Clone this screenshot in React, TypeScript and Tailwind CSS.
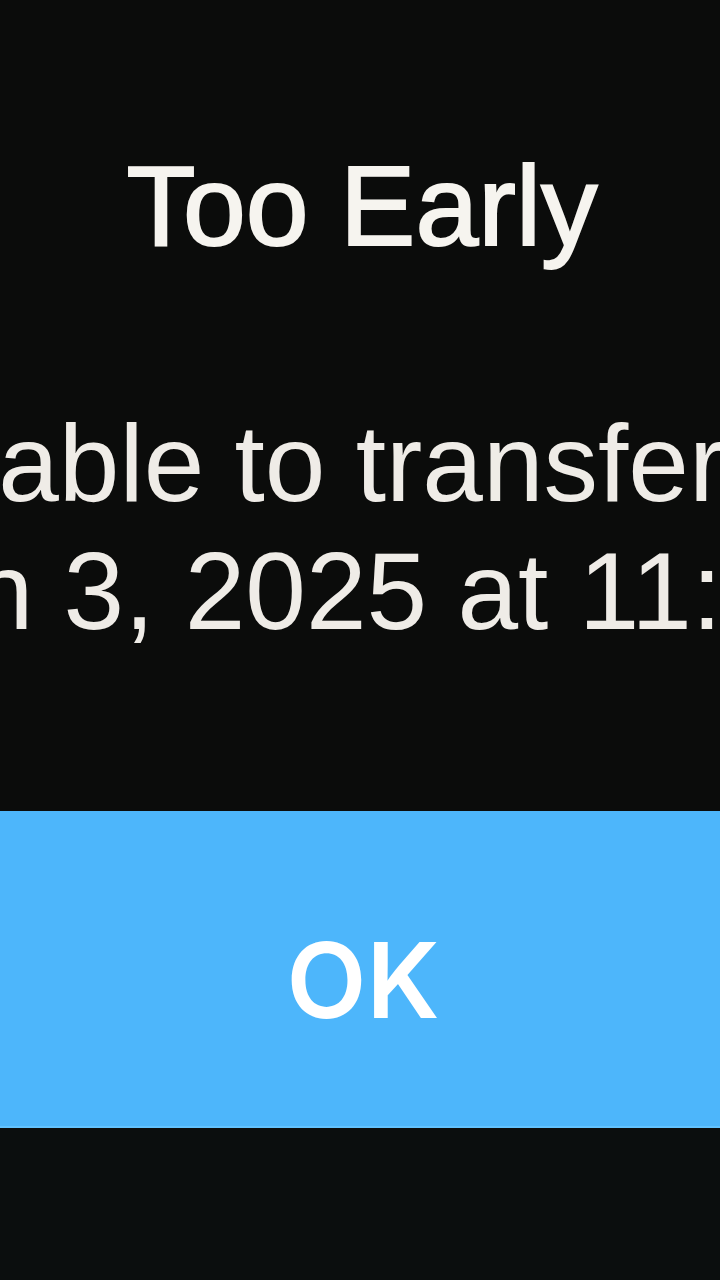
import React from "react";

export default function App() {
  return (
    <div className="w-[720px] h-[1280px] overflow-hidden bg-[#0b0c0b] flex flex-col font-['Liberation_Sans',Arial,sans-serif]">
      <div className="pt-[142px] pl-[4px] text-center text-[113px] leading-[128px] text-[#f6f4ef] whitespace-nowrap [-webkit-text-stroke:2px_#f6f4ef]">
        Too Early
      </div>
      <div className="mt-[129px] text-[109px] leading-[128px] text-[#efece7] whitespace-nowrap">
        <div className="ml-[-226px]">available to transfer this ticket</div>
        <div className="ml-[-294px]">on Jun 3, 2025 at 11:00 AM.</div>
      </div>
      <button className="mt-[156px] h-[317px] w-full bg-[#4db6fb] flex items-center justify-center pt-[22px] pl-[6px] border-b-2 border-[#62c3ff]">
        <span className="font-['Inter',sans-serif] font-semibold text-[104px] leading-none text-white">OK</span>
      </button>
      <div className="flex-1 bg-[#0b0e0e]" />
    </div>
  );
}
